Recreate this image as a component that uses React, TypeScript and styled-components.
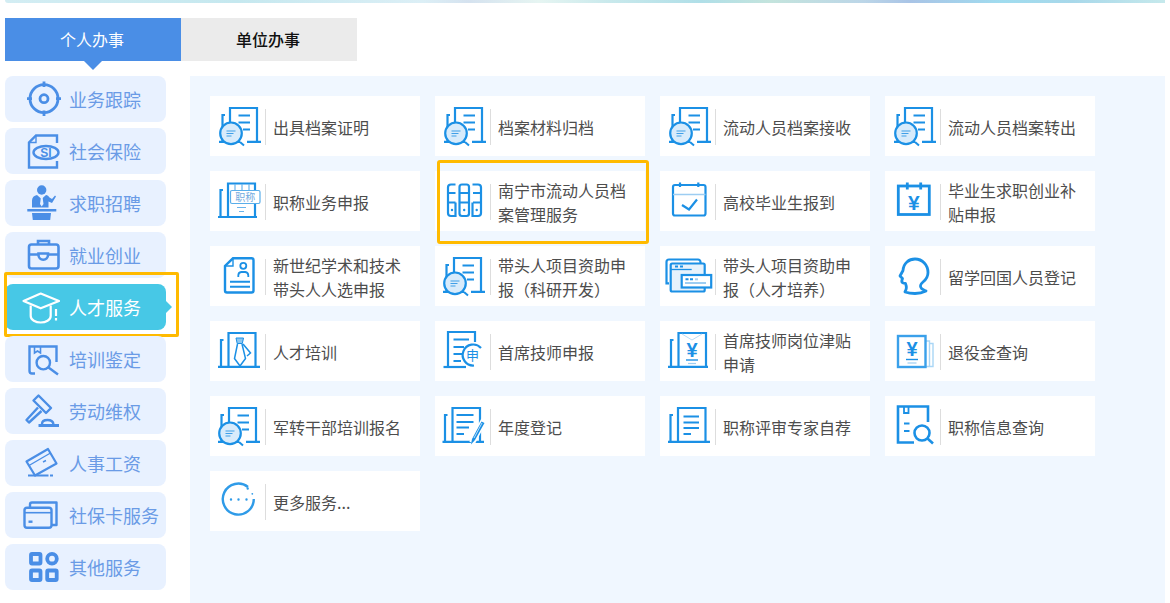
import React from "react";
import styled, { createGlobalStyle } from "styled-components";

const GlobalStyle = createGlobalStyle`
  html, body {
    margin: 0;
    padding: 0;
    background: #fff;
    font-family: "Noto Sans CJK SC", "Liberation Sans", sans-serif;
  }
`;

const BLUE = "#1b90e5";
const SOFT = "#d8ebfb";

/* ---------- shared drawing bits for the service cards ---------- */

const Shelf = ({ x1 = 9, x2 = 51, px = 20, top = 12, right = 47 }: any) => (
  <g fill="none" stroke={BLUE} strokeWidth="2.200">
    <path d={`M${px} 46V${top}H${right}V46`} />
    <path d={`M${x1} 45.800H${x2}`} />
    <path d={`M${px - 5} 19H${px - 7.500}V46`} />
  </g>
);

const Lens = () => (
  <g>
    <path d="M30 46l4 3.500" stroke={BLUE} strokeWidth="2" fill="none" />
    <circle cx="21" cy="37.300" r="10.800" fill={SOFT} stroke={BLUE} strokeWidth="2.200" />
    <path d="M16.500 35h9M16.500 37.500h7M16.500 40h5" stroke="#3f9fe8" strokeWidth="1.200" fill="none" />
  </g>
);

const DocSearch = ({ dx = 0 }: { dx?: number }) => (
  <g transform={`translate(${dx} 0)`}>
    <Shelf />
    <path d="M28.500 19.500H40M28.500 26.500H40M33 33.500H40" stroke={BLUE} strokeWidth="2" fill="none" />
    <rect x="30" y="44" width="7" height="3" fill="#fff" />
    <Lens />
  </g>
);

const YenText = styled.text`
  font-family: "Liberation Sans", sans-serif;
  font-weight: 700;
  text-anchor: middle;
`;

const IconLabel = styled.text`
  font-family: "Noto Sans CJK SC", sans-serif;
  text-anchor: middle;
`;

const cardIcons: Record<string, React.ReactNode> = {
  docSearch: <DocSearch />,
  docSearchLeft: <DocSearch dx={-1} />,
  title: (
    <g fill="none" stroke={BLUE} strokeWidth="2.200">
      <path d="M18 46V12.500H45V19M45 32V46" />
      <path d="M8 46H47M13 19H10.500V46" />
      <path d="M25 13v6M32 13v6M39 13v6" stroke="#6ab4ec" strokeWidth="1.200" />
      <rect x="20.500" y="19.500" width="29.500" height="13" rx="1.500" fill="#fff" stroke="#5aaeea" strokeWidth="1.200" />
      <path d="M27 36.500h9M29 40.500h5" stroke="#6ab4ec" strokeWidth="1.200" />
      <IconLabel x="35.200" y="30" fontSize="10" fill="#6fa9de" stroke="none">职称</IconLabel>
    </g>
  ),
  binders: (
    <g fill="none" stroke={BLUE} strokeWidth="2.200">
      <path d="M20.500 13.500H16a3 3 0 0 0-3 3V42a3 3 0 0 0 3 3h4.500V31.500" />
      <path d="M13 22h7.500M13 31.500h7.500" />
      <rect x="24.500" y="13.500" width="9.500" height="31.500" rx="2.500" />
      <path d="M24.500 22h9.500M24.500 31.500h9.500" />
      <path d="M37.500 13.500H43a3 3 0 0 1 3 3V42a3 3 0 0 1-3 3h-5.500V31.500" />
      <path d="M38 22h8M38 31.500h8" />
      <path d="M17 39h.01M29.200 39h.01M41.700 39h.01" strokeWidth="2.400" strokeLinecap="round" />
    </g>
  ),
  calendar: (
    <g fill="none" stroke={BLUE} strokeWidth="2.200">
      <rect x="13" y="14" width="32.500" height="30.500" rx="2" />
      <path d="M13 23.500h32.500" stroke="#9dcdf2" strokeWidth="1.400" />
      <path d="M20 11.500v4.500M38.300 11.500v4.500" />
      <path d="M22 34l7 4.500 8-10" strokeWidth="2.200" />
    </g>
  ),
  calendarYen: (
    <g>
      <rect x="13.300" y="15" width="31" height="28.500" fill="none" stroke={BLUE} strokeWidth="2.800" />
      <path d="M22.300 11.500v7M35.700 11.500v7" stroke={BLUE} strokeWidth="2.800" />
      <YenText x="28.800" y="39" fontSize="21" fill={BLUE}>¥</YenText>
    </g>
  ),
  person: (
    <g fill="none" stroke={BLUE} strokeWidth="2.400">
      <path d="M23 12.300H41.500a2 2 0 0 1 2 2V44.500a2 2 0 0 1-2 2H17a2 2 0 0 1-2-2V20z" />
      <path d="M23 12.300V20H15" strokeWidth="1.400" />
      <circle cx="33.300" cy="19.800" r="3" strokeWidth="1.800" />
      <path d="M28.300 31v-1.500a3.500 3.500 0 0 1 3-3.500h4a3.500 3.500 0 0 1 3 3.500V31" strokeWidth="1.800" />
      <path d="M20 35.800H40M20 40.800H40" strokeWidth="2" />
    </g>
  ),
  windows: (
    <g stroke={BLUE} strokeWidth="2.200">
      <path d="M9 37.300H6.500V16a2.500 2.500 0 0 1 2.500-2.500H38a2.500 2.500 0 0 1 2.500 2.500v1.500" fill="#fff" />
      <rect x="10.700" y="17.500" width="34" height="28" rx="1.500" fill="#e6f2fc" />
      <path d="M10.700 23.500h21" strokeWidth="1.300" />
      <rect x="21.700" y="29" width="29.500" height="12.500" fill="#fff" />
      <path d="M15 20.600h3M20 20.600h3M25.500 33.300h3M30 33.300h3" strokeWidth="2" />
      <path d="M35 33.300h3" stroke="#9dcdf2" strokeWidth="2" />
      <path d="M25 37h21" stroke="#9dcdf2" strokeWidth="2" />
    </g>
  ),
  profile: (
    <path
      d="M20 45.500c2-2.500 1.500-5.500.5-8-1.500 0-4.500-.5-3.500-3.500l.5-1.500-2.500-2.500 3-5.500C18.500 17 24 13 30 13c7.500 0 13 6 13 13.500 0 4.500-2.500 7.500-5 9.500-2.500 2-3.500 4.500-1.500 6.500 1 1 3 1.500 4.500 2.500-3 1.500-7 2.500-11 2.500-3.500 0-7-.5-10-1.500z"
      fill="none"
      stroke={BLUE}
      strokeWidth="2.800"
      strokeLinejoin="round"
    />
  ),
  tie: (
    <g fill="none">
      <Shelf px={18.500} right={45.500} x1={8} x2={50} />
      <path d="M26 17h7.500l-1.200 5.500H27.200z" fill="#8cc6f0" stroke={BLUE} strokeWidth="1" />
      <path d="M27.500 23L24.500 37.500 30 45l5.500-7.500L32 23" stroke={BLUE} strokeWidth="1.500" />
      <path d="M33 23l7.500 9-3.500 3" stroke={BLUE} strokeWidth="1.500" />
    </g>
  ),
  chief: (
    <g fill="none" stroke={BLUE} strokeWidth="2.200">
      <path d="M13 46V11H40V21" />
      <path d="M8.500 46H31" />
      <path d="M18.500 18.500H34M18.500 26H29M18.500 33H27M18.500 40H26" />
      <path d="M46 27a10.500 10.500 0 1 0-7 17.500" />
      <IconLabel x="37.500" y="39" fontSize="13" fill={BLUE} stroke="none">申</IconLabel>
    </g>
  ),
  yenDoc: (
    <g>
      <Shelf px={18.500} right={46} x1={8} x2={48} />
      <path d="M22 13l10 6 10-6" stroke="#bcdcf5" strokeWidth="1" fill="none" />
      <YenText x="32" y="36" fontSize="20" fill={BLUE}>¥</YenText>
      <path d="M26 39h12" stroke={BLUE} strokeWidth="1.400" />
      <path d="M28 42.500h8" stroke="#9dcdf2" strokeWidth="1.200" />
    </g>
  ),
  refund: (
    <g fill="none">
      <path d="M41 20h3.500v25.500H41M44.500 22.500H48V45.500H44.500" stroke="#a9d6f6" strokeWidth="1.400" />
      <rect x="13" y="15" width="27.500" height="31" stroke="#3aa0ea" strokeWidth="2.400" />
      <YenText x="27" y="35" fontSize="20" fill={BLUE}>¥</YenText>
      <path d="M21 38.500h12" stroke={BLUE} strokeWidth="1.400" />
      <path d="M22.500 42h9" stroke="#9dcdf2" strokeWidth="1.200" />
    </g>
  ),
  pen: (
    <g fill="none">
      <Shelf px={17.500} right={45} x1={7.500} x2={49} />
      <path d="M21.500 19H38.500M21.500 26H38.500M21.500 31.500H34M21.500 38H29" stroke={BLUE} strokeWidth="2" />
      <path d="M49 24L37 47" stroke="#fff" strokeWidth="6" />
      <path d="M36 48.500l1-5.500 9.500-17.500 3 1.500L40 44z" fill={BLUE} />
      <path d="M47 27l-8 15" stroke="#fff" strokeWidth=".7" />
    </g>
  ),
  plainDoc: (
    <g fill="none">
      <Shelf px={18} right={45.500} x1={8} x2={50} />
      <path d="M23.500 20.500H39M23.500 26.500H39M23.500 32H39M23.500 38H31" stroke={BLUE} strokeWidth="2" />
    </g>
  ),
  docLens: (
    <g fill="none" stroke={BLUE} strokeWidth="2.600">
      <path d="M29 46.500H13V10.500H43V26" />
      <path d="M19 10.500V17H23.500V10.500" strokeWidth="1.800" />
      <path d="M19 27.500H24.500M19 35H24.500" strokeWidth="2" />
      <circle cx="37" cy="37" r="7.500" />
      <path d="M42.500 42.500L48 47.500" />
    </g>
  ),
  more: (
    <g fill="none" stroke="#2f9be8">
      <path d="M38 16A15.500 15.500 0 1 0 43.800 28" strokeWidth="2.400" />
      <path d="M21 28.500h.01M28.500 28.500h.01M36.500 28.500h.01M37.700 17.500h.01" strokeWidth="2.400" strokeLinecap="round" />
      <path d="M42.300 22.800h.01" strokeWidth="1.800" strokeLinecap="round" />
    </g>
  ),
};

const services = [
  { label: "出具档案证明", icon: "docSearch" },
  { label: "档案材料归档", icon: "docSearch" },
  { label: "流动人员档案接收", icon: "docSearch" },
  { label: "流动人员档案转出", icon: "docSearch" },
  { label: "职称业务申报", icon: "title" },
  { label: "南宁市流动人员档案管理服务", icon: "binders", marked: true },
  { label: "高校毕业生报到", icon: "calendar" },
  { label: "毕业生求职创业补贴申报", icon: "calendarYen" },
  { label: "新世纪学术和技术带头人人选申报", icon: "person" },
  { label: "带头人项目资助申报（科研开发）", icon: "docSearchLeft" },
  { label: "带头人项目资助申报（人才培养）", icon: "windows" },
  { label: "留学回国人员登记", icon: "profile" },
  { label: "人才培训", icon: "tie" },
  { label: "首席技师申报", icon: "chief" },
  { label: "首席技师岗位津贴申请", icon: "yenDoc" },
  { label: "退役金查询", icon: "refund" },
  { label: "军转干部培训报名", icon: "docSearchLeft" },
  { label: "年度登记", icon: "pen" },
  { label: "职称评审专家自荐", icon: "plainDoc" },
  { label: "职称信息查询", icon: "docLens" },
  { label: "更多服务...", icon: "more" },
];

/* ---------- sidebar icons, drawn with currentColor ---------- */

const sideIcons: Record<string, React.ReactNode> = {
  target: (
    <g fill="none" stroke="currentColor" strokeWidth="2.800">
      <circle cx="39" cy="22.700" r="14" />
      <circle cx="39" cy="22.700" r="4" />
      <path d="M39 5.500v5.500M39 34.500v5.500M22 22.700h5M51 22.700h5" />
    </g>
  ),
  insurance: (
    <g fill="none" stroke="currentColor" strokeWidth="2.400">
      <path d="M52 15V7.500H31L24 14.500V39.500H52V33" />
      <path d="M31 7.500V14.500H24" strokeWidth="1.400" />
      <ellipse cx="41" cy="24.500" rx="12.500" ry="6.500" strokeWidth="2.400" />
      <YenText x="41" y="29" fontSize="12" fill="currentColor" stroke="none">SI</YenText>
    </g>
  ),
  speaker: (
    <g fill="currentColor">
      <circle cx="36.700" cy="10" r="4.700" />
      <path d="M27 27.500v-7c0-3 2-5 5-5.500l4.500 4 4.500-4c1.500.3 2.500 1 3.500 2.500l2.500 1.500 3-3.500 1 1-4 6.500-3.500-1.500v6z" />
      <path d="M22.300 29h29v2.500h-29zM27 33h19l-.8 7H27.800z" />
      <path d="M36 17h1.500l1 7-1.800 2.500-1.700-2.500z" fill="#e8f1ff" />
    </g>
  ),
  briefcase: (
    <g fill="none" stroke="currentColor" strokeWidth="2.600">
      <rect x="24" y="12.500" width="29.500" height="24" rx="2.500" />
      <path d="M33 12.500V9h11v3.500M24 22.500h9.500M43 22.500h10.500" />
      <path d="M33.500 21.500h9.500v1.500a4.700 4.700 0 0 1-9.500 0z" />
    </g>
  ),
  cap: (
    <g fill="none" stroke="currentColor" strokeWidth="2.200">
      <path d="M18.500 17L35.700 9.500 54 17 35.700 24.300z" strokeLinejoin="round" />
      <path d="M25.700 21.500V32c0 4 5 6.500 10 6.500s10-2.500 10-6.500V21.500" />
      <path d="M51 25v7M51 34v2.500" />
    </g>
  ),
  study: (
    <g fill="none" stroke="currentColor" strokeWidth="2.400">
      <path d="M30 37.500H27a2.500 2.500 0 0 1-2.500-2.500V10.500H51.500V26" />
      <path d="M29.500 10.500V17l3-2 3 2V10.500" strokeWidth="1.600" />
      <circle cx="38.300" cy="26.700" r="6.700" />
      <path d="M43.500 31.500L53 38.500" />
    </g>
  ),
  gavel: (
    <g fill="none" stroke="currentColor" strokeWidth="2.400" strokeLinejoin="round">
      <path d="M33.500 7.500L28.500 12.500 41 25l5-5z" />
      <path d="M33 19.500L21.500 32l2.500 2.500L36.500 23" />
      <path d="M33.500 37.500h20.500" strokeWidth="3" />
      <path d="M37 36c0-2.500 2-4 5.500-4s5.500 1.500 6 4" />
    </g>
  ),
  payCard: (
    <g fill="none" stroke="currentColor" strokeWidth="2.200" strokeLinejoin="round">
      <path d="M21.500 21.500L43 9l8.500 14.500L30 35.500z" />
      <path d="M24 25.500L45.500 13" strokeWidth="1.400" />
      <path d="M38 22l3-1.500" strokeWidth="1.400" />
      <path d="M23 35.500H43.500M45 35.500H48" />
    </g>
  ),
  cards: (
    <g fill="none" stroke="currentColor" strokeWidth="2.400" strokeLinejoin="round">
      <path d="M25 15v-2.500a2 2 0 0 1 2-2h24.500V33H47" />
      <rect x="19.500" y="15.700" width="27" height="20" rx="2.500" />
      <path d="M19.500 20.700H46.500" strokeWidth="1.600" />
      <path d="M23.500 29.700h4" />
    </g>
  ),
  grid: (
    <g fill="none" stroke="currentColor" strokeWidth="3.800">
      <rect x="26" y="10" width="9.500" height="9.500" rx="1" />
      <circle cx="47" cy="14.700" r="4.800" />
      <rect x="26" y="26.500" width="9.500" height="9.500" rx="1" />
      <rect x="42.200" y="26.500" width="9.500" height="9.500" rx="1" />
    </g>
  ),
};

const sideItems = [
  { label: "业务跟踪", icon: "target" },
  { label: "社会保险", icon: "insurance" },
  { label: "求职招聘", icon: "speaker" },
  { label: "就业创业", icon: "briefcase" },
  { label: "人才服务", icon: "cap", active: true },
  { label: "培训鉴定", icon: "study" },
  { label: "劳动维权", icon: "gavel" },
  { label: "人事工资", icon: "payCard" },
  { label: "社保卡服务", icon: "cards" },
  { label: "其他服务", icon: "grid" },
];

/* ---------- page ---------- */

const Page = styled.div`
  width: 1170px;
  height: 603px;
  overflow: hidden;
  padding: 0 5px;
  box-sizing: border-box;
`;

const Banner = styled.div`
  height: 3px;
  border-radius: 0 0 0 4px;
  background: linear-gradient(
    90deg,
    #d3edf3 0%,
    #c5e8ef 20%,
    #dceff6 36%,
    #d5e2ef 40%,
    #e6f5f2 46%,
    #c9e9ec 52%,
    #b0dfe8 60%,
    #c4e4dd 66%,
    #bcd6e8 74%,
    #a9c4e6 78%,
    #a0dcef 86%,
    #a8d8ea 92%,
    #c6e9ec 100%
  );
`;

const Tabs = styled.div`
  display: flex;
  margin-top: 15px;
`;

const Tab = styled.div<{ $on?: boolean }>`
  position: relative;
  width: 176px;
  height: 43px;
  padding-right: 2px;
  box-sizing: border-box;
  line-height: 43px;
  text-align: center;
  font-size: 16px;
  font-weight: ${({ $on }) => ($on ? 400 : 500)};
  color: ${({ $on }) => ($on ? "#fff" : "#111")};
  background: ${({ $on }) => ($on ? "#4a8ee6" : "#ebebeb")};

  ${({ $on }) =>
    $on &&
    `&::after {
      content: "";
      position: absolute;
      left: 79px;
      top: 43px;
      border-top: 9px solid #4a8ee6;
      border-left: 9px solid transparent;
      border-right: 9px solid transparent;
    }`}
`;

const Main = styled.div`
  display: flex;
  gap: 24px;
  margin-top: 15px;
`;

const Sidebar = styled.div`
  width: 161px;
  flex: none;
  display: flex;
  flex-direction: column;
  gap: 6px;
`;

const SideItem = styled.div<{ $on?: boolean }>`
  position: relative;
  height: 46px;
  display: flex;
  align-items: center;
  border-radius: 8px;
  background: ${({ $on }) => ($on ? "#47c8e6" : "#e8f1ff")};
  color: ${({ $on }) => ($on ? "#fff" : "#4a8ee6")};

  ${({ $on }) =>
    $on &&
    `&::before {
      content: "";
      position: absolute;
      right: -6px;
      top: 17px;
      border-left: 6px solid #47c8e6;
      border-top: 6px solid transparent;
      border-bottom: 6px solid transparent;
    }
    &::after {
      content: "";
      position: absolute;
      left: -1px;
      right: -13px;
      top: -12px;
      bottom: -7px;
      border: 3px solid #ffba00;
      border-radius: 2px;
    }`}
`;

const SideIcon = styled.svg`
  width: 60px;
  height: 46px;
  flex: none;
`;

const SideLabel = styled.span<{ $on?: boolean }>`
  margin-left: 4px;
  font-size: 18px;
  line-height: 24px;
  white-space: nowrap;
  color: ${({ $on }) => ($on ? "#fff" : "#6a9be6")};
`;

const Panel = styled.div`
  flex: 1;
  height: 527px;
  padding: 20px;
  box-sizing: border-box;
  background: #f0f7ff;
  display: grid;
  grid-template-columns: repeat(4, 210px);
  grid-auto-rows: 60px;
  gap: 15px;
  align-content: start;
`;

const Card = styled.div<{ $marked?: boolean }>`
  position: relative;
  display: flex;
  align-items: center;
  background: #fff;

  ${({ $marked }) =>
    $marked &&
    `&::after {
      content: "";
      position: absolute;
      left: 2px;
      right: -4px;
      top: -11px;
      bottom: -13px;
      border: 3px solid #ffba00;
      border-radius: 3px;
    }`}
`;

const CardIcon = styled.svg`
  width: 55px;
  height: 60px;
  flex: none;
`;

const Divider = styled.div`
  width: 1px;
  height: 36px;
  margin-top: 1px;
  flex: none;
  background: #ddd;
`;

const CardLabel = styled.div`
  width: 136px;
  margin: 2px 0 0 7px;
  font-size: 16px;
  line-height: 24px;
  color: #4d4d4d;
`;

export default function App() {
  return (
    <Page>
      <GlobalStyle />
      <Banner />
      <Tabs>
        <Tab $on>个人办事</Tab>
        <Tab>单位办事</Tab>
      </Tabs>
      <Main>
        <Sidebar>
          {sideItems.map((item) => (
            <SideItem key={item.label} $on={item.active}>
              <SideIcon viewBox="0 0 60 46">{sideIcons[item.icon]}</SideIcon>
              <SideLabel $on={item.active}>{item.label}</SideLabel>
            </SideItem>
          ))}
        </Sidebar>
        <Panel>
          {services.map((item) => (
            <Card key={item.label} $marked={item.marked}>
              <CardIcon viewBox="0 0 55 60">{cardIcons[item.icon]}</CardIcon>
              <Divider />
              <CardLabel>{item.label}</CardLabel>
            </Card>
          ))}
        </Panel>
      </Main>
    </Page>
  );
}
